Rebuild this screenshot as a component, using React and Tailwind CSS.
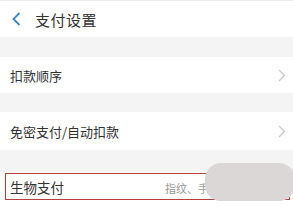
import React from "react";

const font = { fontFamily: '"Noto Sans CJK SC", "Noto Sans", sans-serif' };

function Chevron() {
  return (
    <svg width="8" height="13" viewBox="0 0 8 13" fill="none">
      <path d="M1 1 L6.5 6.5 L1 12" stroke="#c8c8c8" strokeWidth="1.3" />
    </svg>
  );
}

export default function App() {
  return (
    <div className="w-[293px] h-[207px] bg-white overflow-hidden relative" style={font}>
      <div className="h-[37px] border-t border-[#ececec] flex items-center">
        <svg className="ml-[12px]" width="9" height="14" viewBox="0 0 9 14" fill="none">
          <path d="M7.5 1 L1.5 7 L7.5 13" stroke="#3b87c4" strokeWidth="1.8" />
        </svg>
        <span className="ml-[14px] text-[15px] leading-none text-[#333] tracking-[0.5px]">支付设置</span>
      </div>
      <div className="h-[20px] bg-[#f4f4f4]" />
      <div className="h-[36px] flex items-center justify-between pl-[10px] pr-[7px]">
        <span className="text-[13px] leading-none text-[#333]">扣款顺序</span>
        <Chevron />
      </div>
      <div className="h-[19px] bg-[#f4f4f4]" />
      <div className="h-[38px] flex items-center justify-between pl-[10px] pr-[7px]">
        <span className="text-[13px] leading-none text-[#333]">免密支付/自动扣款</span>
        <Chevron />
      </div>
      <div className="h-[22px] bg-[#f4f4f4]" />
      <div className="ml-[5px] mt-[1px] w-[285px] h-[27px] border-[1.5px] border-[#b8403c] flex items-center justify-between pl-[4px] pt-[3px]">
        <span className="text-[13.5px] leading-none text-[#333]">生物支付</span>
        <span className="mr-[80px] text-[11px] leading-none text-[#999]">指纹、手</span>
      </div>
      <div className="absolute left-[205px] top-[163px] w-[90px] h-[38px] rounded-[16px] bg-[#dcd7d7]" />
    </div>
  );
}
